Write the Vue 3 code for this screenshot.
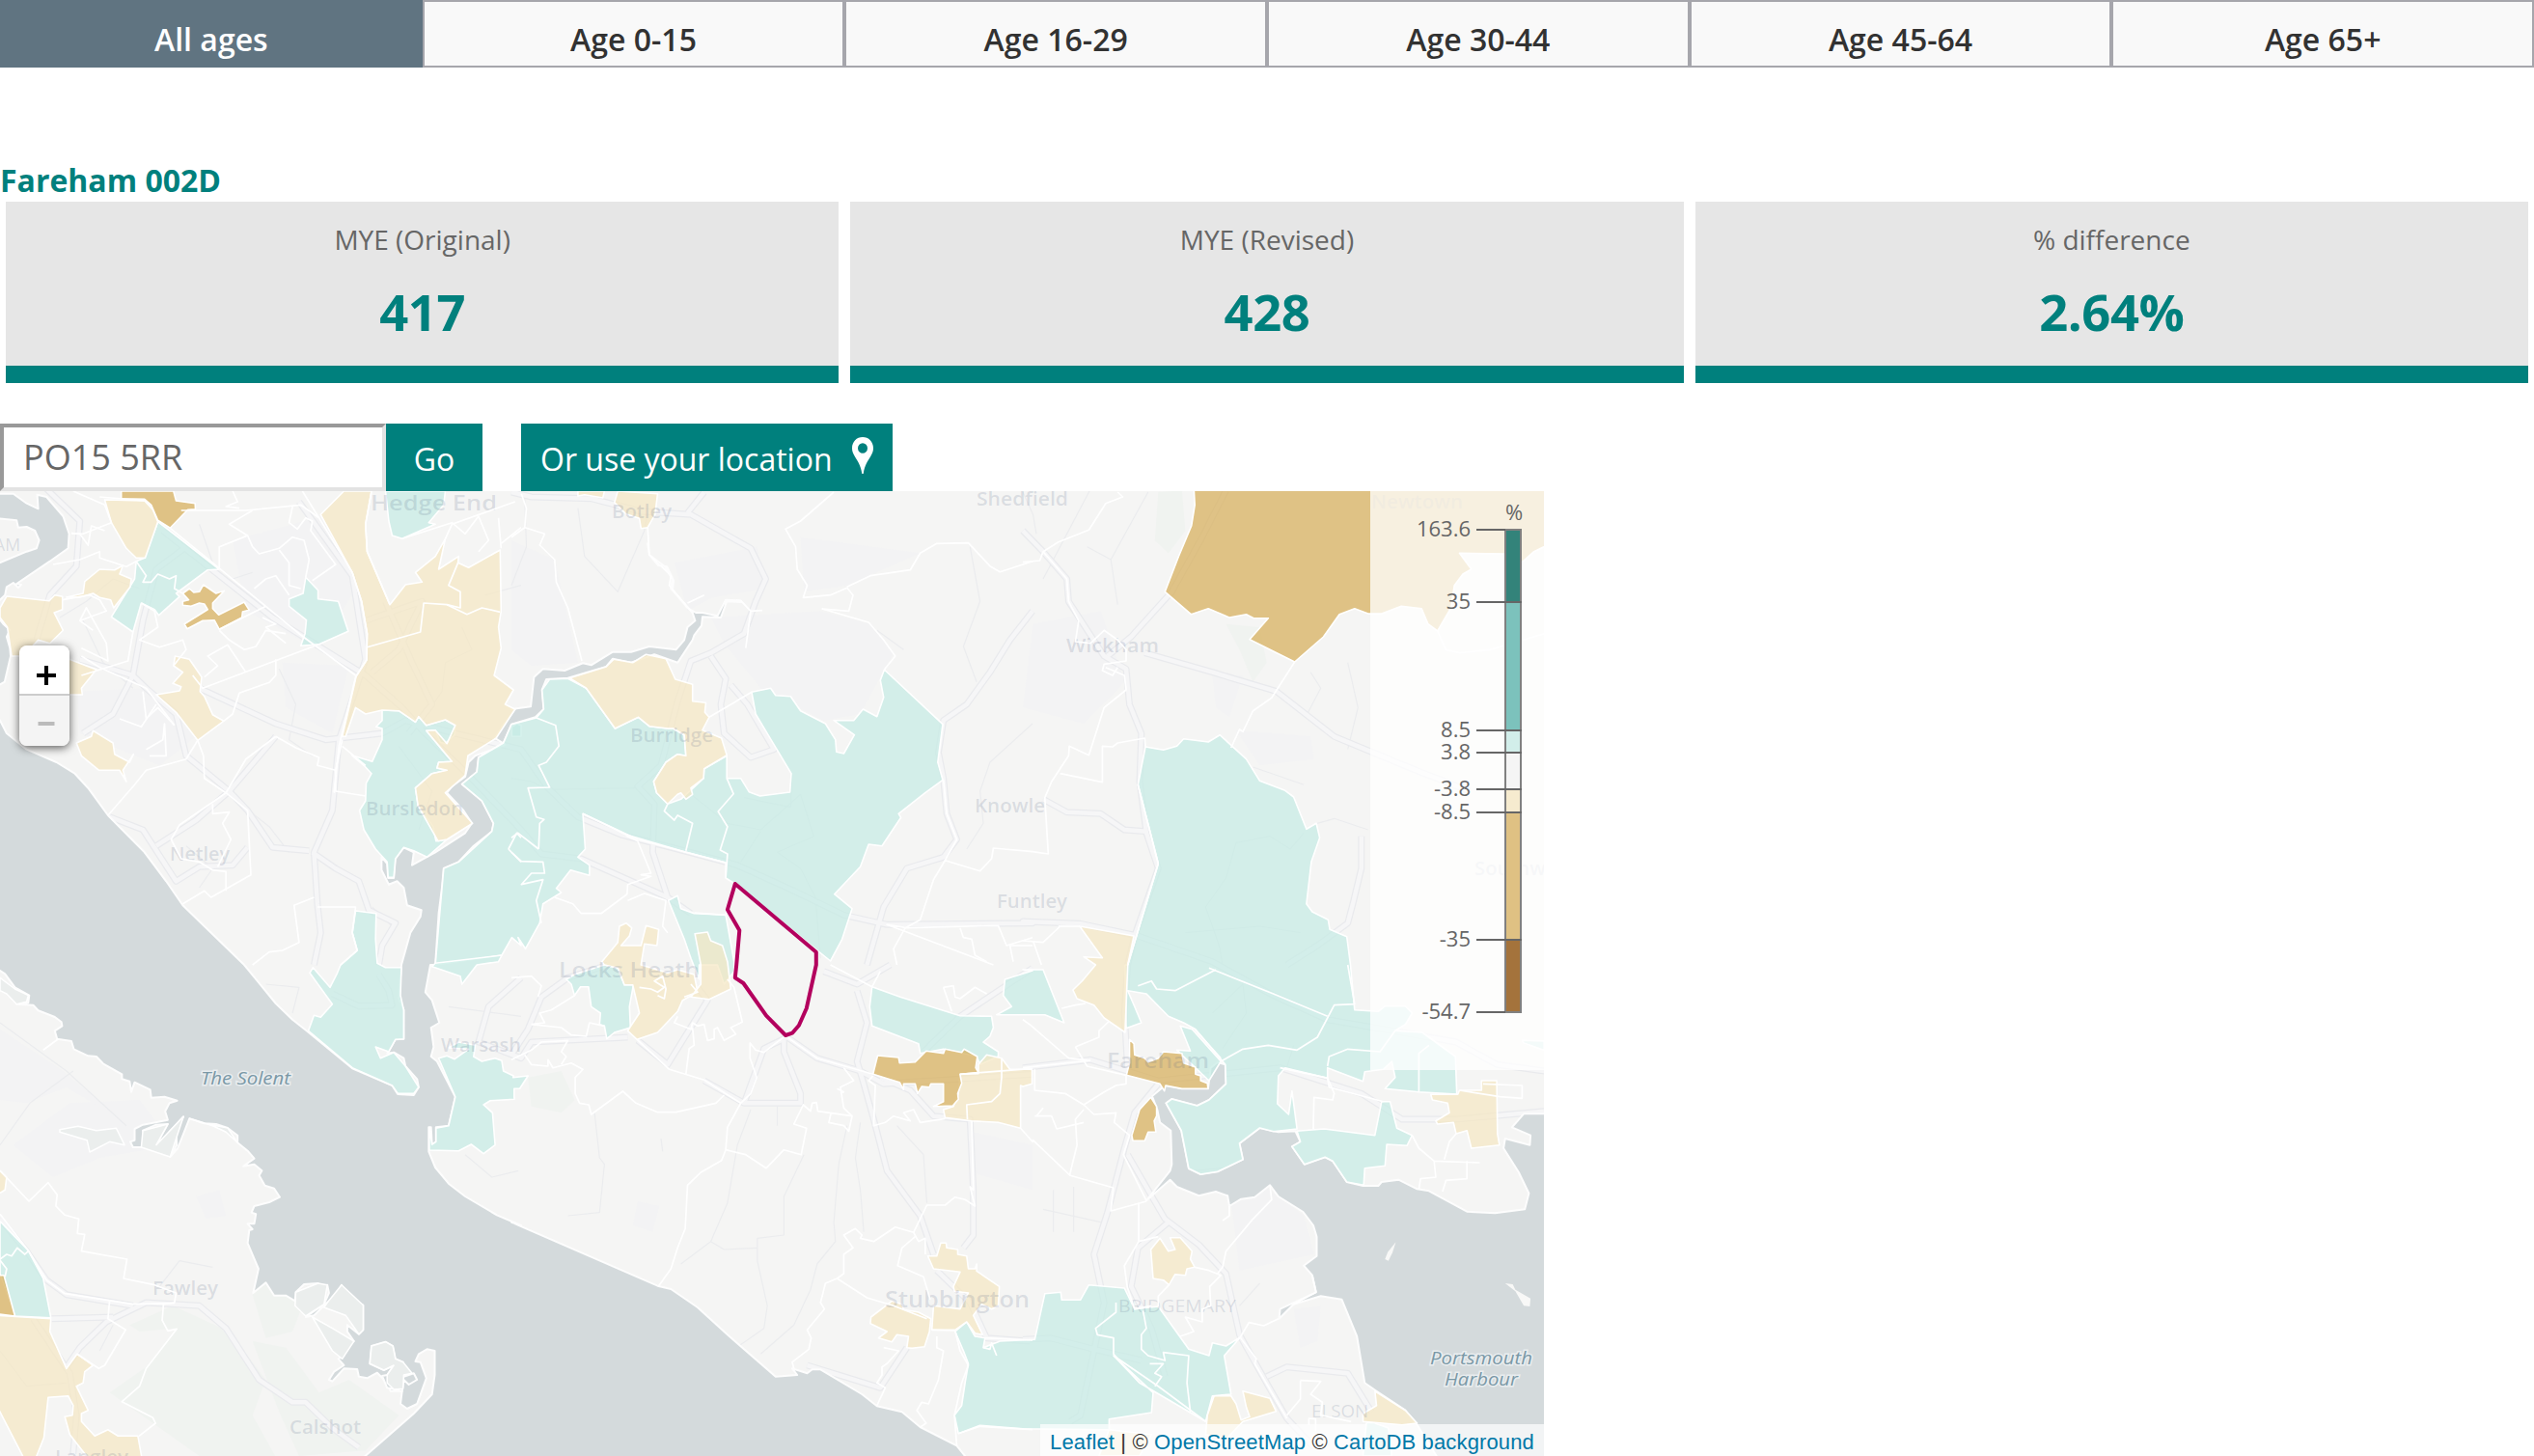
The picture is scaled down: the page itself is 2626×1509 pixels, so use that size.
<script setup>
const tabs = ['All ages', 'Age 0-15', 'Age 16-29', 'Age 30-44', 'Age 45-64', 'Age 65+']
const cards = [
  { label: 'MYE (Original)', value: '417' },
  { label: 'MYE (Revised)', value: '428' },
  { label: '% difference', value: '2.64%' }
]

// Map geometry is digitised per sheet; each sheet has an origin and a scale.
const sheets = {
  A: [0, -9, 540 / 1568],
  B: [530, -9, 540 / 1568],
  C: [1060, -9, 550 / 1568],
  D: [0, 491, 540 / 1568],
  E: [530, 491, 540 / 1568],
  F: [1060, 491, 550 / 1568]
}
function trace(src, closed = true) {
  let sheet = sheets.A
  const out = []
  for (const token of src.trim().split(/\s+/)) {
    if (sheets[token]) { sheet = sheets[token]; continue }
    const [x, y] = token.split(',').map(Number)
    out.push((sheet[0] + x * sheet[2]).toFixed(1) + ' ' + (sheet[1] + y / 3).toFixed(1))
  }
  return 'M' + out.join('L') + (closed ? 'Z' : '')
}
const lines = (list) => list.map((s) => trace(s, false))
const areas = (list) => list.map((s) => trace(s))

const water = areas([
  'A -20,35 40,35 80,65 115,82 112,38 140,45 190,105 208,160 205,205 150,245 50,315 64,318 55,327 40,312 20,325 15,350 -20,385 -20,258 80,215 110,205 118,180 105,150 80,138 55,140 50,118 -20,110',
  'A -20,400 10,440 30,458 20,480 30,515 32,540 14,620 -20,640',
  // Solent, River Hamble and the western shore
  `A -20,715 0,740 20,780 80,830 170,870 225,905 265,950 325,1035 435,1150 500,1240 550,1315 735,1500
   D 830,120 880,170 925,207 1060,322 1180,375 1197,402 1245,405 1260,380 1255,355 1220,315 1215,290 1185,272 1165,275 1190,232 1215,230 1215,140 1200,105 1208,0
   A 1235,1400 1265,1350 1268,1330 1225,1315 1215,1260 1195,1240 1170,1250 1148,1205 1148,1165 1165,1185 1168,1230 1185,1230 1190,1170 1215,1135 1245,1150 1240,1190 1310,1150 1400,1090 1420,1060 1395,1020 1345,965 1360,945 1400,915 1410,870 1430,850 1520,815 1490,795 1510,760 1550,705
   B 0,705 58,697 68,605 95,580 160,585 215,562 240,568 305,527 360,527 415,510 495,520 520,490 530,450 553,430 545,405 480,330 484,300 460,260 415,225 410,190 415,225 442,258 468,262 488,305 485,335 530,390 555,405 575,405 620,415 645,365 690,367 692,372 648,370 630,420 575,418 572,445 550,475 545,490 500,560 430,535 360,560 305,548 285,573 170,608 105,612 92,645 97,705 72,730 0,752
   A 1515,810 1440,855 1435,900 1390,938 1450,990 1485,1060 1480,1085 1425,1130 1380,1180 1335,1200 1330,1260 1320,1340 1310,1500
   D 1295,0 1280,85 1300,110 1322,180 1297,195 1305,255 1297,285 1315,300 1370,410 1350,500 1312,505 1312,550 1300,560 1297,505 1290,505 1290,580 1310,630 1350,680 1400,720 1495,778 1568,810
   E 0,800 440,998 480,1008 560,1065 650,1150 795,1280 860,1275 845,1255 890,1270 905,1258 930,1258 1055,1335 1100,1372 1175,1390 1230,1437 1340,1495 1375,1540
   D 1090,1535 1245,1395 1300,1335 1308,1275 1308,1200 1285,1195 1260,1210 1250,1233 1265,1235 1283,1285 1255,1365 1225,1380 1205,1365 1210,1325 1175,1325 1165,1300 1135,1268 1105,1285 1080,1280 1075,1257 1035,1255 1000,1295 990,1290 1005,1265 1035,1245 1018,1225 1035,1215 1030,1190 1065,1170 1045,1140 1045,1120 1080,1148 1093,1135 1093,1058 1040,1030 1028,995 1010,1030 985,1050 945,1090 920,1095 975,1055 990,1020 985,995 970,1012 957,990 915,993 890,1018 888,1045 860,1028 825,1028 800,988 762,1020 778,945 745,865 750,825 760,822 745,805 765,805 770,775 757,770 765,750 810,738 842,722 825,695 797,686 780,655 788,640 765,620 732,626 765,602 745,578 715,553 715,530 685,507 650,495 615,493 570,478 535,570 512,597 532,560 530,515 552,472 500,530 470,560 505,495 470,497 430,515 440,543 425,567 400,567 392,550 405,545 405,510 430,497 505,482 497,455 510,430 533,422 495,410 455,413 452,388 405,365 395,395 390,362 367,355 367,340 310,307 290,285 265,283 222,262 215,237 172,230 165,205 187,190 185,178 165,162 115,142 100,125 50,122 85,118 88,95 45,70 15,28 -20,5`,
  'D 1113,1240 1155,1260 1185,1245 1165,1275 1150,1278 1165,1315 1210,1325 1215,1290 1230,1305 1255,1290 1245,1270 1215,1280 1213,1235 1190,1225 1182,1185 1160,1172 1118,1185',
  `F 1560,463 1480,463 1445,505 1500,530 1498,560 1425,540 1420,570 1465,645 1495,710 1483,760 1395,772 1312,767 1200,703 1165,697 1110,668 1060,675 1050,687 1005,687 957,675 915,610 893,598 832,620 795,565 820,550 805,517 755,520 700,507 640,555 650,605 575,643 525,651 490,633 468,515 423,430 440,417 515,438 550,420 600,370 598,310 575,303 555,320 547,385 470,385 420,375 382,408 397,450 405,490 437,515 440,620 435,640 365,733 435,668 455,690 520,718 570,705 605,718 610,750 645,728 685,722 730,685 755,720 828,768 858,810 868,845 868,905 830,935 855,965 866,1018 760,1070 757,1100 800,1055 880,1030 942,1040 987,1155 1010,1300 1045,1325 1130,1385 1165,1430 1230,1540 1560,1540`
])
const marsh = areas([
  'D 1113,1240 1155,1260 1185,1245 1165,1275 1165,1300 1185,1320 1213,1318 1215,1275 1240,1270 1213,1235 1190,1225 1182,1185 1160,1172 1118,1185',
  'D 0,40 45,75 85,95 80,115 50,122 20,90 0,80',
  'D 180,512 235,502 290,515 350,508 375,560 330,550 270,582 262,545 180,520',
  'D 430,515 505,495 470,560 552,472 512,597 425,567',
  'D 570,478 615,493 685,507 715,553 680,520 640,500',
  'D 890,1018 957,990 985,995 975,1055 920,1092 888,1060',
  'D 985,1050 1028,995 1093,1058 1093,1135 1080,1148 1040,1090 975,1065',
  'D 940,1095 1000,1130 1065,1170 1030,1225 1000,1200'
])
const parks = areas([
  'D 390,1120 520,1060 690,1140 800,1290 760,1400 830,1530 600,1527 330,1330 440,1250 530,1130 420,1140',
  'D 760,1170 860,1190 960,1330 1050,1290 1200,1400 1100,1510 900,1527 840,1390',
  'D 760,1025 800,990 860,1030 910,1060 880,1140 800,1160',
  'E 50,350 150,330 190,420 150,460 60,440',
  'C 400,30 470,25 480,150 430,220 390,180',
  'C 600,440 700,450 720,560 680,620 640,520'
])
const tracts = areas([
  'A 700,180 990,100 1070,330 960,520 740,400',
  'A 230,650 440,640 600,780 480,880 240,780',
  'A 850,560 1050,570 1000,780 860,700',
  'B 0,180 130,240 200,560 60,570 0,520',
  'B 490,250 740,200 760,330 600,360 530,400',
  'B 600,420 930,400 1080,440 1150,530 1050,720 940,740 750,640 640,500',
  'B 870,170 1230,220 1010,320 880,340',
  'C 30,440 230,400 300,620 180,750 0,700',
  'C 560,600 650,600 610,730 570,700',
  'C 630,770 850,790 860,860 700,880',
  'D 210,430 420,420 520,560 300,600 160,660 40,560',
  'D 590,720 660,700 680,780 620,790',
  'D 0,200 190,330 360,480 200,380 80,430 0,420',
  'E 1390,520 1568,560 1568,700 1400,650',
  'E 380,735 445,750 425,830 365,810',
  'F 600,600 830,780 860,900 640,950',
  'F 800,1070 880,1060 870,1170 820,1190'
])

const roads = lines([
  'A 140,20 240,120 230,260 150,350 110,490',
  'A 560,200 470,270 430,430 400,600 340,720 250,780',
  'A 900,60 1060,290 1100,550 1020,800 1000,1020 945,1150 955,1310 965,1400 945,1500',
  'A 600,640 830,750 980,800 1150,780 1220,740 1370,780 1568,830 B 110,950 200,1040 330,1095 500,1140 680,1190 850,1270 1000,1345 1130,1375 1568,1370 C 0,1365 170,1372 340,1410 560,1490 F 740,95 900,170 1120,210 1280,240 1400,310 1540,330',
  'A 490,150 820,420 1100,600 1210,700 1270,770 1400,900 1568,1080 B 90,1155 210,1170 470,1290',
  'A 240,550 400,600 440,640 530,720 560,850 690,960 745,1020 820,1135 930,1145',
  'A 1100,430 1270,370 1200,520 1120,590',
  'A 1160,370 1240,560 1300,690 1230,780',
  'A 940,1150 1010,1200 1080,1240 1110,1330 1190,1370 1150,1440 1140,1500',
  'A 470,1130 590,1050 690,960 830,790',
  'A 330,1040 430,1080 530,1240 600,1195 700,1190 745,1135',
  'B 0,30 60,45 240,50 390,90 540,100 720,205 765,300 735,370 700,470 600,530 540,555 500,680 450,880 380,945 430,1000 425,1150 470,1290 540,1340',
  'B 580,30 530,95',
  'B 600,540 645,610 630,690 640,780 720,855 790,830 710,690 660,630',
  'B 1568,400 1500,490 1440,590 1370,690 1300,740 1285,840 1300,920 1310,1030 1340,1110 1300,1165 1190,1200 1120,1320 1070,1500',
  'C 0,150 60,215 130,300 135,370 240,540 305,580 315,690 350,780 345,930 365,1090 400,1200 330,1410 310,1500 F 300,150 310,330',
  'C 600,25 530,170 440,340 320,480 250,540',
  'C 360,530 560,590 750,650 920,790 1150,890 1320,960',
  'C 60,985 130,1025 230,1030 300,1080 365,1085',
  'C 1000,1100 1000,1200 975,1310 960,1370 870,1440 780,1500',
  'D 200,1250 240,1190 320,1110 440,1050 600,1060 680,1130 780,1290 880,1360 920,1360 1000,1440 1080,1500',
  'D 0,790 80,890 140,980 200,1025 400,1060',
  'D 155,1100 340,1095',
  'D 100,1100 210,1270 230,1400 220,1520',
  'D 1000,90 1080,128 1180,125 1170,80 1140,30',
  'D 1568,40 1470,130 1440,240 1568,290 E 60,240 350,225',
  'E 0,280 50,200 90,100 170,40 290,0',
  'E 380,235 470,310 590,110 560,70',
  'E 700,430 760,260 830,225 920,290 1050,330 1120,370 1568,340',
  'E 820,230 820,270 870,400 870,430 700,430 580,360',
  'E 1040,80 1070,180 1040,300 1060,370 1090,480 1130,640 1230,780 1270,900',
  'E 940,20 1040,60 1140,0',
  'E 1110,350 1200,390 1270,470 1380,480 1390,700 1390,840 1360,880',
  'E 1240,270 1350,160 1568,10',
  'F 0,320 200,295 400,360 760,320 1000,400 1120,480 1280,480 1540,455',
  'F 310,590 370,700 420,790 520,870 600,960 640,1150 720,1300 780,1410 860,1500',
  'F 400,370 330,460 300,570 250,770 210,900 240,1050 210,1200 170,1400 140,1420',
  'F 720,1280 780,1250 960,1270 1030,1390',
  'F 430,800 340,880 320,1000 380,1130 420,1280',
  'F 0,1165 80,1160 210,1195 350,1230',
  'E 1560,1170 1430,1160 1380,1050 1280,950',
  'E 890,1245 1000,1280 1110,1315 1190,1190'
])
const lanes = lines([
  'A 600,130 640,250 700,300 760,280', 'A 180,420 260,370 340,300 420,330', 'A 250,430 310,560 400,640',
  'A 840,580 890,690 870,800 940,850', 'A 700,980 810,1070 870,1150', 'A 560,1130 640,1200 600,1260',
  'A 1390,450 1420,520 1340,560 1330,650 1270,740', 'A 1460,350 1568,320', 'A 1200,820 1300,960 1260,1080',
  'A 1120,1320 1180,1380', 'B 200,80 220,230 320,340 400,150 410,90', 'B 40,50 45,200 0,320', 'B 0,920 60,930 110,955 375,950',
  'B 540,970 650,1060 750,1080 870,970 910,1100 800,1150 870,1200 915,1290 930,1480', 'B 750,1085 690,1180',
  'B 700,980 840,1010 845,910', 'B 1380,200 1410,370 1360,510 1400,620', 'B 1180,520 1100,460', 'B 1568,750 1440,870 1410,960 1420,1060 1370,1140',
  'C 0,30 30,100 40,160', 'C 370,30 260,240 190,200', 'C 260,240 280,380', 'C 200,20 60,300', 'C 850,590 880,640 840,720',
  'C 960,560 990,700 960,830', 'C 680,885 830,940', 'C 830,1090 790,1140 730,1100 630,1120 600,1230 540,1320 580,1440 590,1500',
  'C 870,1060 920,1045 1020,1080', 'C 480,1400 700,1380 820,1400', 'D 0,180 200,330 380,500', 'D 0,560 90,430 220,330',
  'D 800,60 900,70 880,150', 'D 480,1000 540,920 640,940', 'D 300,1200 340,1120', 'D 0,1200 80,1310 200,1300',
  'D 1350,130 1568,160', 'D 1400,590 1480,660 1560,640', 'E 250,460 265,600 280,620 265,770 170,780',
  'E 450,540 455,580', 'E 800,440 800,500', 'E 880,590 820,720 820,840 740,850 740,920 770,1060 760,1130 650,1210',
  'E 720,450 680,560 650,740 600,860 640,885 740,880', 'E 1050,490 1035,600 1050,700 1060,830', 'E 1010,500 985,620 970,800 975,860 920,930 900,1010 850,1120 750,1210',
  'E 1160,500 1240,590 1250,740', 'E 510,930 600,860', 'F 500,640 700,620 760,650 870,740 980,840 990,1000 1100,1110 1120,1200',
  'F 60,760 230,800', 'F 90,700 90,830', 'F 150,690 150,830', 'F 640,1060 700,990', 'F 560,150 650,60 660,150 590,260',
  'F 800,250 780,320', 'F 1160,750 1200,820 1100,1080'
])

const teal = areas([
  'A 1160,27 1340,27 1335,70 1290,125 1310,130 1210,175 1180,165 1170,120',
  'A 475,122 660,270 625,272 530,345 540,355 478,413 465,395 425,375 400,465 335,418 405,300 410,245 435,235',
  'A 920,295 957,335 957,362 1018,370 1048,463 960,503 905,508 918,470 922,428 870,385 870,362 912,345',
  'A 1150,708 1200,710 1250,745 1260,728 1283,755 1340,738 1370,755 1368,785 1340,812 1325,808 1310,770 1283,772 1360,868 1320,870 1315,888 1345,895 1300,905 1250,950 1258,1005 1303,1070 1312,1115 1345,1110 1285,1165 1245,1145 1215,1135 1190,1170 1185,1228 1168,1228 1165,1180 1130,1140 1095,1080 1082,1020 1100,990 1102,935 1118,905 1095,880 1058,848 1120,868 1150,800 1150,765 1132,760 1150,740',
  'A 1540,760 1555,750 1568,755 1568,790 1540,790',
  `B 0,752 75,732 97,705 92,645 115,612 170,610 225,640 312,765 382,730 415,758 470,765 487,765 520,785 525,850 500,845 465,870 428,930 437,965 470,1000
   510,985 578,920 580,890 648,850 648,920 690,920 715,962 748,975 838,963 842,905 735,720 723,652 780,640 795,662 840,665 870,710 945,750 975,800 978,838 1000,843 1032,785 970,740 1030,740 1058,705 1100,728 1120,668 1110,615 1122,582 1298,752 1283,870 1298,925 1245,965 1165,1030 1172,1042 1115,1130 1075,1125 1050,1195 972,1280 1025,1325 995,1420 960,1488 673,1248 645,1230 645,1182 380,1110 215,1030 222,1140 200,1165 235,1190 235,1222 178,1205 135,1262 150,1275 95,1310 85,1370 42,1450 20,1415
   A 1568,1440 1540,1415 1510,1470 1310,1500 1335,1200 1380,1180 1480,1085 1485,1060 1450,990 1390,938 1435,900 1440,855 1515,810`,
  'D 1435,0 1390,60 1385,35 1300,5 1310,-5 1510,-30 1500,-10',
  'A 1070,1332 1132,1340 1130,1420 1135,1495 D 1160,8 1208,8 1205,95 1215,140 1215,230 1190,232 1170,270 1130,255 1145,290 1185,272 1220,315 1260,380 1245,400 1197,400 1180,375 1060,320 928,205 945,157 965,163 1000,122 932,25 942,8 993,70 1015,25 A 1025,1500 1075,1455 1060,1400',
  'D 1320,290 1345,283 1368,293 1410,262 1350,258 1380,240 1430,250 1425,285 1450,300 1490,290 1510,298 1515,330 1545,345 E 5,350 50,345 25,385 8,385 8,410 D 1548,418 1475,422 1455,435 1482,460 1490,560 1455,587 1418,558 1380,578 1292,576 1292,505 1300,558 1312,550 1312,508 1350,500 1370,410',
  'B 472,1300 500,1285 510,1325 550,1340 645,1345 670,1490 670,1520 E 640,60 620,0 565,0 565,45 540,-20 520,-80',
  'E 165,45 190,30 280,0 320,10 340,62 367,62 355,130 358,195 310,210 287,230 280,190 265,185 268,150 240,130 232,68 208,68 190,95 180,60',
  'E 1085,68 1170,100 1350,158 1445,160 1450,195 1440,222 1420,240 1465,270 1465,285 1410,310 1400,285 1300,262 1230,275 1225,245 1085,190 1078,130',
  'E 1568,18 1485,45 1480,95 1505,130 1460,155 1568,155 F 65,155 122,180 60,15 0,15',
  'C 362,822 415,832 455,820 475,797 548,807 582,785 660,860 700,928 775,958 800,978 838,1078 867,1060 877,1105 852,1180 838,1310 855,1335 902,1360 907,1390 957,1412 968,1500 F 980,140 1050,145 1070,128 1130,128 1150,150 1130,185 1100,205 1180,210 1278,285 1282,402 1170,395 1070,385 1100,350 1090,300 1065,325 1010,332 1005,362 900,320 900,352 775,320 755,345 752,432 785,465 795,392 810,510 740,518 700,507 640,555 650,605 575,643 525,651 490,633 468,515 423,430 440,417 515,438 550,420 600,370 598,310 510,200 475,180 430,160 365,90 310,80 330,130 350,180 305,197 302,0 C 310,1500 400,1185 340,940',
  'F 465,190 500,200 585,300 550,360 520,330 455,265 495,268',
  'F 810,517 890,510 1040,530 1060,425 1085,425 1105,508 1150,530 1135,562 1075,558 1070,625 1010,632 1007,685 957,675 915,610 893,598 832,620 795,565 820,550',
  'F 1475,235 1540,237 1540,265 1480,243',
  'F 65,1022 112,1018 115,1042 170,1042 195,995 300,1005 330,1070 400,1062 490,1195 550,1215 560,1175 600,1185 642,1158 595,1215 615,1335 560,1340 540,1420 345,1300 268,1215 385,1330 380,1392 255,1412 255,1445 0,1442 E 1410,1432 1345,1457 1333,1400 1355,1370 1365,1300 1375,1240 1360,1200 1335,1140 1370,1110 1395,1155 1425,1160 1420,1190 1470,1170 F 35,1165',
  'F 1015,1425 1040,1425 1080,1440 1090,1527 1005,1527',
  'D 0,797 85,888 130,975 153,1097 45,1092 0,960'
])
const sand = areas([
  'A 315,54 435,57 460,85 475,122 437,235 410,235 380,205 335,125',
  'A 0,390 20,354 148,368 165,350 188,355 188,395 163,405 190,460 150,500 115,490 70,540 35,540 22,450 0,420',
  'A 205,548 290,582 245,640 248,660 200,660',
  'A 200,357 250,345 255,308 300,270 345,272 370,258 360,285 395,300 392,325 342,390 333,365 300,358 280,345 240,357',
  'A 527,540 570,550 607,605 602,650 615,665 640,722 673,742 595,802 530,715 470,660 540,648 545,635 520,625 550,590 522,570',
  'A 230,810 275,790 280,772 340,810 345,845 390,870 402,845 370,895 380,930 360,895 298,895 245,850',
  'A 1035,27 1118,27 1100,130 1105,215 1173,380 1220,318 1270,310 1250,280 1310,230 1340,175 1320,270 1380,230 1378,250 1410,265 1505,210 1508,400 1500,450 1508,515 1487,600 1545,645 1520,690 1550,705 1493,795 1408,850 1400,910 1395,915 1340,965 1422,1060 1345,1110 1318,1115 1258,1005 1250,950 1300,905 1345,895 1315,888 1320,870 1360,868 1283,772 1310,770 1345,812 1370,755 1340,738 1283,755 1260,728 1250,745 1200,710 1150,708 1100,720 1070,700 1040,790 1030,790 1072,602 1103,552 1105,470 1088,370 1060,280 965,100',
  'B 200,27 280,27 275,48 220,38 200,42', 'B 320,27 440,35 432,100 410,140 390,143 385,112 345,98 310,62',
  'B 175,608 285,573 308,550 365,560 405,535 465,548 493,612 545,628 545,680 585,685 582,715 595,730 575,770 632,795 648,848 580,890 578,920 540,950 545,970 525,985 510,965 500,970 470,1000 437,965 428,930 465,870 500,845 525,850 520,785 487,765 470,765 415,758 382,730 312,765 225,640',
  'B 272,1490 320,1430 325,1380 345,1370 362,1385 355,1410 330,1440 390,1440 405,1378 443,1390 438,1440 400,1435 390,1500 E 470,25 500,15 550,30 560,85 515,110 500,145 440,210 378,232 350,205 385,150 365,62 340,62 320,10 280,0',
  'B 552,1403 590,1398 600,1425 635,1440 650,1490 E 660,75 595,107 540,100 570,60 570,0',
  'E 1350,340 1405,338 1405,310 1430,280 1475,290 1500,325 1565,325 F 27,328 27,370 0,378 E 1532,375 1532,508 1465,490 1385,485 1305,475 1300,450 1330,440 1345,400',
  'E 1292,865 1308,865 1310,880 1343,885 1343,900 1370,905 1375,945 1395,945 1400,930 1400,952 1468,1000 1465,1060 1445,1070 1415,1055 1390,1090 1418,1150 1395,1145 1370,1110 1335,1135 1265,1135 1270,1060 1350,1070 1375,1020 1333,1015 1330,1000 1350,955 1270,945 1253,905 1280,905',
  'E 1145,1045 1175,1055 1180,1072 1225,1080 1262,1100 1258,1140 1243,1187 1205,1192 1190,1190 1195,1155 1160,1150 1145,1172 1105,1160 1130,1140 1080,1115 1082,1095',
  'C 168,1380 328,1410 310,1500 F 302,210 240,165 210,125 160,105 148,78 175,50 C 215,1500 180,1475 235,1478',
  'F 1205,403 1285,403 1290,390 1355,390 1355,360 1400,360 1402,525 1408,560 1370,565 1325,570 1312,515 1280,525 1272,490 1225,495 1220,485 1260,460 1255,430 1210,420',
  'F 405,850 430,890 450,885 435,848 465,848 500,890 495,915 508,940 485,945 480,965 450,962 432,995 415,980 385,975 378,885',
  'F 565,1340 615,1340 630,1365 645,1415 670,1405 660,1375 650,1325 730,1348 748,1388 650,1420 600,1475 540,1460 545,1400',
  'F 1040,1325 1130,1385 1165,1425 1120,1430 1005,1420 1005,1395 1045,1370',
  'F 255,1445 380,1460 345,1527 225,1527',
  'D -10,630 20,660 15,700 -10,715',
  'D -10,1090 153,1100 150,1140 200,1255 232,1210 280,1245 255,1265 250,1300 230,1310 265,1385 245,1395 245,1420 285,1465 325,1445 355,1465 415,1465 428,1540 270,1540 210,1460 195,1405 218,1400 220,1370 205,1340 145,1345 132,1470 105,1540 75,1540 -10,1370'
])
const amber = areas([
  'A 365,27 522,27 530,57 587,65 588,83 565,85 512,142 475,118 455,70 435,52 365,50',
  'A 612,318 650,345 675,337 640,375 640,392 658,412 735,372 750,397 730,402 728,420 660,457 645,428 610,430 563,455 555,440 625,395 615,378 600,375 575,385 550,382 550,370 568,365 550,345 570,330 583,342 600,340',
  'E 1102,282 1165,288 1168,305 1215,302 1248,268 1300,275 1305,262 1355,272 1362,262 1402,285 1397,320 1405,335 1350,340 1355,368 1343,400 1345,418 1328,438 1270,440 1300,425 1300,370 1262,370 1258,380 1235,378 1222,400 1215,370 1180,370 1180,388 1168,365 1088,340',
  'F 315,232 328,245 330,280 360,290 370,302 400,290 415,270 470,275 475,305 510,318 510,340 525,345 525,360 545,368 547,385 470,385 422,375 418,392 405,370 306,343 315,305',
  'F 378,412 395,440 395,470 388,485 393,520 370,520 360,547 325,547 322,530 345,450',
  'C 505,10 1560,10 1560,190 1510,215 1475,248 1420,222 1290,220 1325,270 1300,285 1275,320 1265,390 1225,462 1197,440 1178,392 1118,385 1060,408 1020,408 980,392 935,410 888,480 803,558 670,488 725,422 682,422 660,410 610,420 548,392 497,410 420,340 460,230 498,135 508,70',
  'D -10,965 12,965 45,1092 -10,1085'
])

const borders = lines([
  'A 300,45 435,57', 'A 220,27 315,70 335,125 250,160 215,158', 'A 545,87 740,87 905,70 940,95 960,110', 'A 700,27 715,60 680,75 720,80',
  'A 760,87 690,130 745,165 760,200 780,222 840,205 880,170 915,180 930,240 920,295', 'A 660,270 660,200 745,165',
  'A 880,75 870,125 895,145 920,110 940,120 935,150 1010,255 940,305', 'A 840,210 870,250 870,320 905,330',
  'A 512,142 800,385 900,470 1070,600', 'A 960,503 610,640 580,600', 'A 830,550 830,600 810,622 720,655 700,720 673,742',
  'A 740,590 685,505 625,540 655,570 615,605', 'A 660,460 690,490 735,520 770,510 800,460 860,470', 'A 800,385 660,457', 'A 765,330 800,300 830,290 870,350',
  'A 790,420 830,440 800,450 860,500', 'A 400,465 385,555 245,600', 'A 245,515 325,555 320,500 260,390 240,430 280,460',
  'A 188,365 270,350 300,365 320,400 240,430', 'A 425,375 465,400 475,450 420,490 480,512 550,490 560,520 522,570',
  'A 245,540 300,575 440,640 525,755', 'A 160,255 240,240 300,215 300,235 380,262 410,245', 'A 215,158 240,160 265,195 275,135 315,150',
  'A 410,245 440,290 430,310 455,310 475,285 510,300 530,290 525,330 550,345', 'A 595,802 560,860 440,895 405,940 325,1035',
  'A 440,830 490,800 495,750 500,850 450,850', 'A 430,650 440,735 475,700 525,755', 'A 360,735 425,760 470,690',
  'A 595,802 612,850 615,920 680,965 745,1020 755,1220 635,1290 615,1270 550,1310', 'A 830,790 740,860 680,965 540,1065 515,1110 545,1170 600,1180 640,1205 680,1210 680,1270',
  'A 640,1000 640,1030 690,1025 670,1060 695,1110 655,1195', 'A 830,790 890,825 960,855 955,880 1010,895 1010,960 1100,975',
  'A 1010,895 1030,800', 'A 1030,820 1100,880', 'A 1105,512 1265,465 1275,375 1345,380 1405,410 1450,390 1505,403', 'A 1345,380 1385,390 1385,340 1350,320 1378,250',
  'A 1118,27 1100,130 1105,215 1173,380', 'A 1340,175 1360,130 1550,60', 'A 1210,175 1360,125 1400,160 1440,105 1470,180 1440,215',
  'A 1508,205 1500,110', 'A 1508,190 1568,140', 'A 955,1320 1070,1320 1060,1400 1075,1455 1025,1500', 'A 945,1290 885,1315 900,1430 850,1455 810,1460 760,1500',
  'A 1530,1140 1555,1090 1568,1105', 'A 1530,1140 1568,1180', 'A 910,27 960,110 1060,280 1088,370 1105,470 1103,552 1070,605 1020,820 1005,965',
  'B 30,35 45,80 40,140 100,160 85,195 130,240 135,310 170,390 212,555', 'B 0,170 40,140', 'B 410,140 415,225 480,290 475,320 540,400',
  'B 530,375 580,350', 'B 970,30 870,120 825,145 855,200 860,270 890,320 878,358 960,350 1010,328 1028,350 1015,400 935,393 1075,435 1120,490 1155,540 1122,582',
  'B 1010,325 1080,290 1200,272 1230,220 1280,190 1375,188 1440,260 1470,278 1568,245', 'B 690,367 720,400 755,398', 'B 720,400 705,515',
  'B 595,730 723,652', 'B 75,732 133,755 143,820 105,870 82,880 115,948 50,950 75,1040 98,1048 85,1060 82,1140', 'B 0,1105 20,1090 82,1140',
  'B 470,1000 460,1022 490,1050 500,1035 545,1060 525,1145', 'B 648,920 668,968 622,1023 650,1070 628,1143 650,1155 645,1230',
  'B 0,1150 30,1178 95,1180 100,1215 60,1215 30,1250 95,1235 75,1300 90,1370', 'B 215,1030 345,1095 520,1148 645,1182', 'B 345,1098 380,1115 420,1215 390,1220 420,1225 350,1250 348,1280 270,1340 210,1340 185,1310 130,1290',
  'B 350,1300 400,1278 465,1300 455,1380 470,1400', 'B 673,1248 645,1345 550,1338', 'B 1450,1500 1130,1375 1190,1385 1465,1378 1490,1440 1568,1415',
  'B 1300,925 1310,1030 1340,1110 1305,1175 1410,1208 1445,1170 1450,1137 1568,1148 C 75,1155 65,980 85,930 135,850 137,820 195,848 240,700 305,645 300,600 245,575',
  'B 1305,1175 1270,1235 1230,1360 1185,1385 1150,1450 1160,1500', 'B 1350,1385 1360,1415 1385,1420 1395,1470 1430,1490', 'B 1568,1440 1500,1440 1510,1490',
  'C 280,30 295,45 245,65 195,148 105,185 60,215 50,243 0,248', 'C 60,215 130,300 135,370 165,430 155,495 200,500 240,460 280,490 305,520 305,555 240,565 235,585 265,600 280,575',
  'C 110,905 235,932 235,820 265,822 280,810 360,795 362,822', 'C 803,558 735,670 680,710 650,775 640,768 615,825', 'C 1225,462 1250,520 1290,530 1380,520 1540,470',
  'C 105,1380 168,1380', 'C 0,1425 60,1430 110,1380', 'C 30,1425 55,1500', 'C 340,940 400,1185 310,1500',
  'D 0,640 87,735 145,677 172,715 168,750 195,778 237,790 233,835 255,838 245,890 382,915 372,975 465,995 530,1020 525,1050 492,1055 488,1105 505,1138 532,1132 440,1255 420,1310 367,1358 460,1408 468,1425 418,1465',
  'D 0,775 85,888 140,980 195,1022 400,1055 525,1052', 'D 330,1045 325,1100 378,1135 315,1245 297,1255 232,1210', 'D 0,915 20,900 35,905 52,880 75,900 85,890', 'D 0,918 20,945 15,970',
  'D 130,265 175,230', 'E 0,40 60,35 90,65 80,100', 'E 60,185 100,180 85,150 120,140 190,95', 'E 60,185 150,195 180,218 225,222 235,180 280,190',
  'E 0,295 60,265 90,240 170,235 150,270 165,285 150,310', 'E 40,280 60,310 110,315 110,295 125,320 180,305 215,325 192,350 192,400 205,430 233,435 240,465 335,393 375,430 440,458 495,458 615,430 640,405',
  'E 378,232 475,325 580,358 690,430', 'E 385,70 420,75 440,85 460,70 430,50 455,35 465,75 460,105 440,95', 'E 540,60 560,85 520,100',
  'E 500,160 490,180 540,200 545,180 560,190 580,185 590,235 610,230 610,200 620,195 640,235 675,215 660,195 695,178 670,70 650,45',
  'E 545,195 550,250 535,260 525,340', 'E 825,220 760,272 735,265 718,243 718,290 738,350 720,400 690,430 650,505 645,575 632,608 570,645 530,685 523,820 500,880 480,945 443,998',
  'E 645,575 705,590 767,632 820,575 872,590 888,508 850,495 878,435 900,455 905,430 918,428 922,455 1025,470 1015,517 1000,500 955,490 962,460',
  'E 830,225 920,290 1088,340', 'E 1088,345 1075,360 1095,375 1090,500 1125,490 1150,470 1200,485 1180,460 1210,450 1230,490 1305,478', 'E 1000,320 1030,360 990,380 1000,445 1025,470',
  'E 980,385 1000,395 990,400', 'E 960,0 1085,68 1110,20', 'E 1385,485 1390,700 1380,690 1395,750 1365,730 1335,722 1305,747 1250,747 1210,832 1155,815 1090,860 1050,850 1055,840 1035,820 1000,840 1028,880 1000,900 1000,960 980,975 945,990 930,1050 942,1070 890,1135 902,1160 895,1195 845,1235 850,1255',
  'E 980,975 1070,1035 1150,1060 1250,1100', 'E 1210,832 1225,860 1245,850 1245,900', 'E 1215,845 1175,880 1162,935 1240,970 1260,1040',
  'E 1120,1190 1165,1200 1130,1240 1115,1250 1115,1275 1100,1300 1125,1315 1100,1370', 'E 1265,1135 1335,1137 1350,1200 1375,1245 1355,1300 1333,1400 1340,1495',
  'E 1280,1155 1280,1190 1300,1200 1285,1290 1255,1365 1235,1360 1220,1385 1248,1425 1230,1437', 'E 1350,340 1405,335 1568,322', 'E 1475,290 1475,350 1470,400 1445,425 1370,435 1372,480', 'E 1532,508 1568,550 F 30,545 140,655 267,693 260,765 365,735',
  'E 1345,1457 1410,1435 1568,1445', 'E 1425,1160 1568,1167', 'E 1420,1190 1440,1195 1445,1175 1460,1215', 'E 1300,70 1330,65 1335,100 1350,105 1395,70 1430,90', 'E 1300,70 1325,145',
  'F 0,320 200,297', 'F 200,297 135,290 20,185 0,170', 'F 115,135 155,125 185,120', 'F 155,255 225,225 225,205 255,175', 'F 155,255 190,315 305,343 305,370 275,375 240,395 180,435 125,400 35,390 35,325',
  'F 180,450 155,480 160,560 138,655', 'F 35,470 85,470 100,510 180,490', 'F 60,445 40,470', 'F 180,435 210,465 275,460 270,490 315,530 297,590 365,733', 'F 342,740 342,860 300,935 308,1000 330,1070 380,1060', 'F 342,860 400,845',
  'F 585,300 650,262 725,250 810,265 870,225 920,125 980,122 960,0', 'F 550,10 740,90 900,160', 'F 340,65 380,50 395,75 450,80 570,15', 'F 900,315 905,285 960,262 1055,270 1100,205',
  'F 760,320 900,352 920,400 915,420 860,412 858,510', 'F 1170,395 1170,275 1200,250', 'F 900,352 905,380 1065,425', 'F 508,200 585,290',
  'F 1150,530 1170,570 1215,610 1350,615', 'F 1215,610 1220,660 1175,665 1170,697', 'F 1312,610 1312,665 1250,670 1240,705', 'F 1280,525 1260,550 1245,605',
  'F 1290,390 1410,410 1475,415 1475,375 1360,370', 'F 730,685 735,730 680,790 600,890 590,940 575,960', 'F 508,940 550,950 585,965 552,1000 555,1060 530,1070 530,1110 480,1095 505,1140 465,1155',
  'F 432,995 400,1030 400,1062', 'F 275,1050 275,1080 215,1130 220,1150 268,1160 268,1210 345,1300', 'F 355,1075 365,1130 350,1150 350,1195 370,1215 420,1230 415,1205 490,1215 485,1300 495,1390', 'F 375,1240 415,1240 390,1270 410,1280 390,1310',
  'F 268,1215 400,1310 540,1420', 'F 642,1158 668,1112 712,1122 755,1100', 'F 642,1158 690,1225 685,1240 780,1410', 'F 820,1292 880,1295 850,1335 885,1360 880,1400 970,1420', 'F 820,1292 820,1350 780,1400', 'F 845,1430 845,1410 865,1412 865,1450',
  'F 855,965 866,1018 800,1055', 'F 610,750 610,780 590,795'
])

const islands = areas(['F 1070,915 1078,893 1102,862 1092,895 1080,920', 'F 1425,990 1447,993 1455,1010 1500,1037 1498,1062 1480,1060 1455,1015'])
const selected = trace('B 673,1248 917,1460 E 917,0 888,135 865,188 845,212 825,219 767,158 698,57 673,40 677,0 B 677,1500 686,1393 650,1328')

const places = [
  { t: 'Hedge End', x: 384, y: 20, w: 131, s: 22 }, { t: 'Botley', x: 634, y: 28, w: 62 }, { t: 'Shedfield', x: 1012, y: 15, w: 95 },
  { t: 'Wickham', x: 1105, y: 167, w: 96 }, { t: 'Burridge', x: 653, y: 260, w: 86 }, { t: 'Bursledon', x: 379, y: 336, w: 101 },
  { t: 'Netley', x: 176, y: 383, w: 62 }, { t: 'Knowle', x: 1010, y: 333, w: 73 }, { t: 'Funtley', x: 1033, y: 432, w: 73 },
  { t: 'Locks Heath', x: 579, y: 504, w: 146, s: 22 }, { t: 'Warsash', x: 457, y: 581, w: 83 }, { t: 'Fareham', x: 1147, y: 598, w: 106, s: 22 },
  { t: 'Stubbington', x: 917, y: 846, w: 150, s: 23 }, { t: 'BRIDGEMARY', x: 1159, y: 851, w: 122, s: 18, n: 1 }, { t: 'ELSON', x: 1359, y: 960, w: 59, s: 18, n: 1 },
  { t: 'Calshot', x: 300, y: 977, w: 74 }, { t: 'Fawley', x: 158, y: 833, w: 68 }, { t: 'Langley', x: 57, y: 1008, w: 76 },
  { t: 'Newtown', x: 1421, y: 18, w: 95 }, { t: 'Southwick', x: 1528, y: 398, w: 101 }, { t: 'AM', x: -6, y: 62, w: 27, s: 18, n: 1 }
]
const waters = [
  { t: 'The Solent', x: 208, y: 615, w: 93 }, { t: 'Portsmouth', x: 1482, y: 905, w: 106 }, { t: 'Harbour', x: 1497, y: 927, w: 76 }
]

const bands = [
  { y: 40, h: 75, c: '#33837a' }, { y: 115, h: 133, c: '#7cc2bc' }, { y: 248, h: 23, c: '#d2eeea' }, { y: 271, h: 38, c: '#f5f5f5' },
  { y: 309, h: 24, c: '#f6ebcf' }, { y: 333, h: 132, c: '#dfc183' }, { y: 465, h: 75, c: '#a4733c' }
]
const ticks = [
  { t: '163.6', y: 40 }, { t: '35', y: 115 }, { t: '8.5', y: 248 }, { t: '3.8', y: 271 },
  { t: '-3.8', y: 309 }, { t: '-8.5', y: 333 }, { t: '-35', y: 465 }, { t: '-54.7', y: 540 }
]
</script>

<template>
  <main class="page">
    <nav class="tabs">
      <button v-for="(tab, i) in tabs" :key="tab" class="tab" :class="{ active: i === 0 }">{{ tab }}</button>
    </nav>

    <h2 class="area-name">Fareham 002D</h2>
    <section class="cards">
      <article v-for="card in cards" :key="card.label" class="card">
        <div class="card-label">{{ card.label }}</div>
        <div class="card-value">{{ card.value }}</div>
      </article>
    </section>

    <form class="search" @submit.prevent>
      <div class="postcode">PO15 5RR</div>
      <button class="go">Go</button>
      <button class="locate">
        <span>Or use your location</span>
        <svg class="pin" width="22" height="38" viewBox="0 0 22 38">
          <path fill="#fff" fill-rule="evenodd" d="M11 0C4.800 0 0 4.800 0 11.500c0 3 1 5.500 2.800 8.500C5.500 24.500 9 29 10.300 38h1.400C13 29 16.500 24.500 19.200 20 21 17 22 14.500 22 11.500 22 4.800 17.200 0 11 0zm0 6.200a5 5.300 0 1 1 0 10.600A5 5.300 0 0 1 11 6.200z" />
        </svg>
      </button>
    </form>

    <section class="map">
      <svg class="canvas" width="1600" height="1000" viewBox="0 0 1600 1000">
        <rect width="1600" height="1000" fill="#f5f5f4" />
        <path v-for="(d, i) in tracts" :key="'t' + i" :d="d" class="tract" />
        <path v-for="(d, i) in parks" :key="'p' + i" :d="d" class="park" />
        <path v-for="(d, i) in lanes" :key="'l' + i" :d="d" class="lane" />
        <path v-for="(d, i) in roads" :key="'rc' + i" :d="d" class="road-case" />
        <path v-for="(d, i) in roads" :key="'r' + i" :d="d" class="road" />
        <path v-for="(d, i) in water" :key="'w' + i" :d="d" class="water" />
        <path v-for="(d, i) in marsh" :key="'m' + i" :d="d" class="marsh" />
        <path v-for="(d, i) in islands" :key="'i' + i" :d="d" class="island" />
        <path v-for="(d, i) in teal" :key="'a' + i" :d="d" class="zone teal" />
        <path v-for="(d, i) in sand" :key="'b' + i" :d="d" class="zone sand" />
        <path v-for="(d, i) in amber" :key="'c' + i" :d="d" class="zone amber" />
        <text v-for="p in places" :key="p.t" :x="p.x" :y="p.y" :textLength="p.w" lengthAdjust="spacingAndGlyphs" :font-size="p.s || 20" class="place" :class="{ district: p.n }">{{ p.t }}</text>
        <path v-for="(d, i) in borders" :key="'e' + i" :d="d" class="border" />
        <text v-for="p in waters" :key="p.t" :x="p.x" :y="p.y" :textLength="p.w" lengthAdjust="spacingAndGlyphs" class="water-name">{{ p.t }}</text>
        <path :d="selected" class="selected" />
      </svg>

      <div class="zoom">
        <button class="zoom-btn"><svg width="22" height="22" viewBox="0 0 22 22"><path d="M11 1v20M1 11h20" stroke="#000" stroke-width="4" /></svg></button>
        <button class="zoom-btn off"><svg width="22" height="22" viewBox="0 0 22 22"><path d="M2.500 11h17" stroke="#bbb" stroke-width="4" /></svg></button>
      </div>

      <svg class="legend" width="180" height="600" viewBox="0 0 180 600">
        <rect width="180" height="600" fill="#fff" fill-opacity="0.75" />
        <rect v-for="b in bands" :key="b.y" x="140" :y="b.y" width="16" :height="b.h" :fill="b.c" />
        <rect x="140" y="40" width="16" height="500" fill="none" stroke="#808080" stroke-width="2" />
        <g v-for="k in ticks" :key="k.t">
          <path :d="`M110 ${k.y}H${k.y === 40 || k.y === 540 ? 140 : 157}`" stroke="#666" stroke-width="2" />
          <text x="104" :y="k.y + 7" text-anchor="end" class="tick">{{ k.t }}</text>
        </g>
        <text x="149" y="30" text-anchor="middle" class="tick unit">%</text>
      </svg>

      <div class="credit"><a>Leaflet</a> | © <a>OpenStreetMap</a> © <a>CartoDB background</a></div>
    </section>
  </main>
</template>

<style>
body { margin: 0; background: #fff; overflow: hidden; }
</style>

<style scoped>
.page { width: 2626px; height: 1509px; overflow: hidden; font-family: "Open Sans", sans-serif; color: #666; }
button { font-family: inherit; border: 0; padding: 0; margin: 0; }
.tabs { display: flex; height: 70px; }
.tab { flex: 1 1 0; box-sizing: border-box; border: 2px solid #a6a6ac; background: #f9f9f9; color: #323232; font-size: 32px; font-weight: 600; line-height: 44px; padding: 17px 0 5px; text-align: center; }
.tab.active { background: #607481; border-color: #607481; color: #fff; }
.area-name { margin: 95px 0 0; height: 44px; line-height: 44px; font-size: 32px; font-weight: 700; color: #00807d; }
.cards { display: flex; gap: 12px; padding: 0 6px; }
.card { flex: 1 1 0; box-sizing: border-box; height: 188px; background: #e6e6e6; border-bottom: 18px solid #00807d; text-align: center; padding-top: 19px; }
.card-label { font-size: 28px; line-height: 40px; }
.card-value { font-size: 52.500px; line-height: 72px; margin-top: 19px; font-weight: 700; color: #00807d; letter-spacing: -0.400px; }
.search { display: flex; height: 70px; margin-top: 42px; }
.postcode { box-sizing: border-box; width: 400px; border: 4px solid; border-color: #999 #e3e3e3 #e3e3e3 #999; padding: 4px 0 0 20px; font-size: 36px; line-height: 54px; }
.go, .locate { background: #00807d; color: #fff; font-size: 32px; line-height: 44px; }
.go { width: 100px; padding-top: 4px; }
.locate { width: 385px; margin-left: 40px; display: flex; align-items: center; padding: 4px 0 0 20px; }
.pin { margin: -9px 0 0 20px; }
.map { position: relative; width: 1600px; height: 1000px; overflow: hidden; }
.canvas { display: block; }
.canvas path { stroke-linejoin: round; }
.water { fill: #d4dadc; stroke: #fdfdfd; stroke-width: 2; }
.tract { fill: #f3f3f4; }
.park { fill: #f0f3f0; }
.marsh { fill: #ebeeed; stroke: #fff; stroke-width: 1.500px; }
.island { fill: #f8f8f7; }
.lane { fill: none; stroke: #ebecee; stroke-width: 1.200px; }
.road-case { fill: none; stroke: #e9eaed; stroke-width: 7; }
.road { fill: none; stroke: #f6f6f7; stroke-width: 4.500px; }
.zone { fill-opacity: 0.7; stroke: #fff; stroke-width: 1.600px; }
.teal { fill: #c4ebe4; }
.sand { fill: #f5e7c2; }
.amber { fill: #d6ac56; }
.border { fill: none; stroke: #fff; stroke-width: 1.700px; }
.selected { fill: none; stroke: #b3005e; stroke-width: 4; }
.place { font-family: "Open Sans", sans-serif; font-weight: 600; fill: #4c5c80; fill-opacity: 0.170; }
.district { font-weight: 400; }
.water-name { font-family: "Open Sans", sans-serif; font-style: italic; font-size: 18px; font-weight: 500; fill: #7a98a6; stroke: #e9edef; stroke-width: 3; paint-order: stroke; }
.zoom { position: absolute; left: 20px; top: 160px; width: 52px; height: 104px; border-radius: 8px; overflow: hidden; box-shadow: 0 2px 10px rgba(0, 0, 0, 0.650); }
.zoom-btn { width: 52px; height: 52px; display: flex; align-items: center; justify-content: center; background: #fff; box-sizing: border-box; border-bottom: 2px solid #ccc; padding-left: 3px; padding-top: 11px; }
.zoom-btn.off { background: #f4f4f4; border: 0; padding-top: 6px; }
.legend { position: absolute; right: 0; top: 0; }
.tick { font-family: "Open Sans", sans-serif; font-size: 22px; fill: #666; }
.credit { position: absolute; right: 0; bottom: 0; box-sizing: border-box; height: 33px; padding: 2px 10px 0; background: rgba(255, 255, 255, 0.700); color: #333; font: 22px/33px "Liberation Sans", Arial, sans-serif; letter-spacing: 0.140px; white-space: nowrap; }
.credit a { color: #0078a8; }
</style>
